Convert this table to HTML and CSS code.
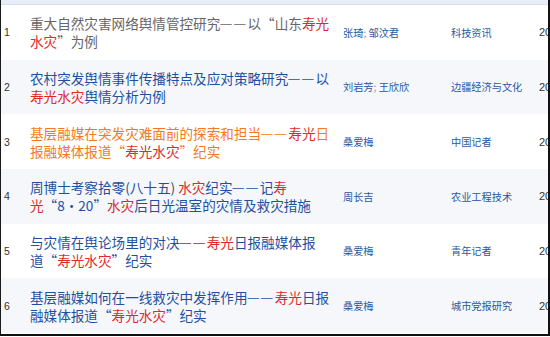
FILE: index.html
```html
<!DOCTYPE html>
<html lang="zh-CN">
<head>
<meta charset="utf-8">
<title>检索结果</title>
<link rel="stylesheet" href="styles.css">
</head>
<body>
<div class="frame">
  <div class="topbar"></div>
  <table class="results">
    <colgroup>
      <col class="c-num"><col class="c-title"><col class="c-author"><col class="c-source"><col class="c-year">
    </colgroup>
    <tbody>
      <tr class="row">
        <td class="num">1</td>
        <td class="title"><a class="t visited">重大自然灾害网络舆情管控研究<span class="dash">——</span>以“山东<em>寿光水灾</em>”为例</a></td>
        <td class="author"><a>张琦</a><span class="sep">; </span><a>邹汶君</a></td>
        <td class="source"><a>科技资讯</a></td>
        <td class="year">2022</td>
      </tr>
      <tr class="row alt">
        <td class="num">2</td>
        <td class="title"><a class="t">农村突发舆情事件传播特点及应对策略研究<span class="dash">——</span>以<em>寿光水灾</em>舆情分析为例</a></td>
        <td class="author"><a>刘岩芳</a><span class="sep">; </span><a>王欣欣</a></td>
        <td class="source"><a>边疆经济与文化</a></td>
        <td class="year">2020</td>
      </tr>
      <tr class="row">
        <td class="num">3</td>
        <td class="title"><a class="t hover">基层融媒在突发灾难面前的探索和担当<span class="dash">——</span><em>寿光</em>日报融媒体报道“<em>寿光水灾</em>”纪实</a></td>
        <td class="author"><a>桑爱梅</a></td>
        <td class="source"><a>中国记者</a></td>
        <td class="year">2019</td>
      </tr>
      <tr class="row alt">
        <td class="num">4</td>
        <td class="title"><a class="t">周博士考察拾零(八十五) <em>水灾</em>纪实<span class="dash">——</span>记<em>寿</em><span class="nb"><em>光</em>“8·20”</span><em>水灾</em>后日光温室的灾情及救灾措施</a></td>
        <td class="author"><a>周长吉</a></td>
        <td class="source"><a>农业工程技术</a></td>
        <td class="year">2019</td>
      </tr>
      <tr class="row">
        <td class="num">5</td>
        <td class="title"><a class="t">与灾情在舆论场里的对决<span class="dash">——</span><em>寿光</em>日报融媒体报<span class="nb">道“<em>寿</em></span><em>光水灾</em>”纪实</a></td>
        <td class="author"><a>桑爱梅</a></td>
        <td class="source"><a>青年记者</a></td>
        <td class="year">2019</td>
      </tr>
      <tr class="row alt">
        <td class="num">6</td>
        <td class="title"><a class="t">基层融媒如何在一线救灾中发挥作用<span class="dash">——</span><em>寿光</em>日报融媒体报道“<em>寿光水灾</em>”纪实</a></td>
        <td class="author"><a>桑爱梅</a></td>
        <td class="source"><a>城市党报研究</a></td>
        <td class="year">2019</td>
      </tr>
    </tbody>
  </table>
</div>
</body>
</html>
```

FILE: styles.css
```css
html, body {
  margin: 0;
  padding: 0;
  background: #ffffff;
}

.frame {
  width: 550px;
  height: 336px;
  box-sizing: border-box;
  border-left: 1px solid #1a1a1a;
  border-right: 2px solid #111111;
  border-bottom: 2px solid #111111;
  overflow: hidden;
  background: #ffffff;
  font-family: "Noto Sans CJK SC", "Microsoft YaHei", sans-serif;
}

.topbar {
  height: 4px;
  background: #e8eef8;
  border-bottom: 1px solid #d6e0f0;
}

.results {
  border-collapse: collapse;
  table-layout: fixed;
  width: 620px;
}

.c-num { width: 29px; }
.c-title { width: 313px; }
.c-author { width: 108px; }
.c-source { width: 88px; }
.c-year { width: 82px; }

.row td {
  height: 54.67px;
  padding: 0;
  vertical-align: middle;
}

.row.alt td {
  background: #f5f7fb;
}

.num {
  padding-left: 3px !important;
  font-family: "Liberation Sans", Arial, sans-serif;
  font-size: 10.5px;
  color: #333333;
}

.title {
  padding-right: 8px !important;
  font-size: 13.6px;
  line-height: 18px;
}

.t {
  color: #1f4f9f;
  text-decoration: none;
}

.t.visited { color: #666666; }
.t.hover { color: #f37a22; }

.t em {
  font-style: normal;
  color: #e0292b;
}

.dash {
  font-family: "Liberation Sans", Arial, sans-serif;
  font-size: 11.5px;
  letter-spacing: 2.1px;
  font-variant-ligatures: none;
  vertical-align: 2px;
}

.nb {
  white-space: nowrap;
}

.author, .source {
  font-size: 10.2px;
  color: #2b58a0;
  white-space: nowrap;
}

.author a, .source a {
  color: #2b58a0;
}

.sep {
  color: #b08c9a;
}

.year {
  font-family: "Liberation Sans", Arial, sans-serif;
  font-size: 11px;
  color: #333333;
  white-space: nowrap;
}
```
